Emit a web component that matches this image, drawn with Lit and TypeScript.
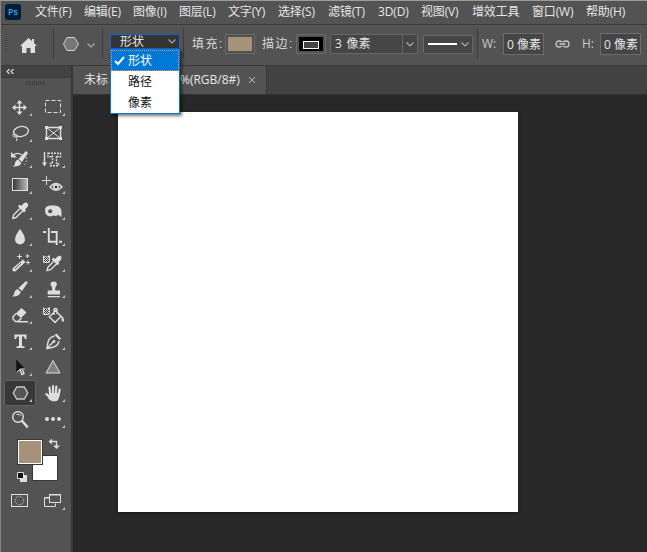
import { LitElement, html, css, svg } from "lit";
import { customElement, property } from "lit/decorators.js";

const menus: [string, number][] = [
  ["文件(F)", 49], ["编辑(E)", 49], ["图像(I)", 46], ["图层(L)", 49],
  ["文字(Y)", 50], ["选择(S)", 50], ["滤镜(T)", 50], ["3D(D)", 43],
  ["视图(V)", 51], ["增效工具", 60], ["窗口(W)", 54], ["帮助(H)", 50],
];

const checker = svg`<path class="fill" d="M6 5l1.500 1.500h3L12 5l1 1v5.500L11.500 13H7l-1-1z"/>
  <path class="dark" d="M8 7h1v1H8zM10 7h1v1h-1zM7 8h1v1H7zM9 8h1v1H9zM11 8h1v1h-1zM8 9h1v1H8zM10 9h1v1h-1zM7 10h1v1H7zM9 10h1v1H9zM11 10h1v1h-1zM8 11h1v1H8zM10 11h1v1h-1z"/>`;

const icons: Record<string, unknown> = {
  move: svg`<path class="line2" d="M15.500 8v11M10 13.500h11"/><path class="fill" d="M15.500 6l3 3.500h-6zM15.500 21l3-3.500h-6zM8 13.500l3.500-3v6zM23 13.500l-3.500-3v6z"/>`,
  marquee: svg`<rect class="line" x="8.500" y="6.500" width="15" height="12" stroke-dasharray="4 2"/>`,
  lasso: svg`<ellipse class="line2" cx="17" cy="11.500" rx="7.500" ry="5" transform="rotate(-10 17 11.500)"/><path class="line" d="M10.500 14c-2.500 0-2 3 .500 3s3-3-.500-3M12 17q1.500 1 .500 4"/>`,
  frame: svg`<path class="line2" d="M9.500 7.500h14v11h-14z"/><path class="line" d="M9.500 7.500l14 11M23.500 7.500l-14 11"/><path class="fill" d="M8 6h3v3H8zM22 6h3v3h-3zM8 17h3v3H8zM22 17h3v3h-3z"/>`,
  history: svg`<path class="line2" d="M9 9.500q4-4 9-.500"/><path class="fill" d="M7 6v5.500h6zM22 5l2 2-6 9-3.500-3zM14 13.500l3.500 3.500q-2 4-9 3.500 3-1.500 2.500-4 1-2.500 3-3z"/><path class="line" stroke-dasharray="1.500 2" d="M22.500 11q1 6-4 9"/>`,
  vtype: svg`<path class="line2" d="M7.500 6v12"/><path class="fill" d="M5 16.500h5l-2.500 4z"/><path class="line2" stroke-dasharray="2 1" d="M11 7.200h12.500v3.500h-3V10h-1v7.500h2v2.300h-8v-2.300h2V10h-1v.700H11z"/>`,
  gradient: svg`<defs><linearGradient id="ramp"><stop stop-color="#333"/><stop offset="1" stop-color="#bbb"/></linearGradient></defs><rect class="line" x="8.500" y="6.500" width="15" height="12" style="fill:url(#ramp)"/>`,
  redeye: svg`<path class="line" d="M5 8.500h9M9.500 4v9"/><path class="line2" d="M13 15q6-7 12 0-6 6.500-12 0z"/><circle class="fill" cx="19" cy="15" r="3"/><circle class="dark" cx="19" cy="15" r="1.300"/>`,
  eyedropper: svg`<path class="fill" d="M17 8l2-2q3-2.500 4.500-.800t-.500 4.300l-2 2 1 1-2 2-6-6 1.500-2z"/><path class="line2" d="M16 10.500L9.500 17l-.700 3.300L12 19.500l6.500-6.500"/>`,
  sponge: svg`<path class="fill" fill-rule="evenodd" d="M8 12q0-4 5-4.500h4.500q6.500.500 7 6V19l-2-1.500-1.500-.500-2 1-3-.500-2 1q-6 0-6-6.500zm3 1.200a2.200 2 0 1 0 4.400 0 2.200 2 0 1 0-4.400 0z"/>`,
  drop: svg`<path class="fill" d="M16 5q5 6.500 5 10.500a5 5 0 0 1-10 0Q11 11.500 16 5z"/>`,
  crop: svg`<path class="line3" d="M6 8h3M11.800 4v13.700H20M14 8h5.700v13M22 17.700h3"/>`,
  wand: svg`<path class="fill" d="M19 9.500l2.500 2.500-10 9.300q-2 .500-2.800-.500t.300-2.800z"/><path class="line" d="M15.500 4v5M13 6.500h5M23.500 4v4M21.500 6h4M24 10.500v4M22 12.500h4"/><path class="darkline" d="M11 19l6-6"/>`,
  sampler: svg`${checker}<path class="fill" d="M18 9l2.500-2.500Q23 5 24.200 6.500t-.700 3.800l-2 2 1 1-2 2-6-6 2-1.500z"/><path class="line2" d="M17 11l-6 6-1 3.500 3.500-.800L19.500 14"/>`,
  brush: svg`<path class="fill" d="M21.500 5.500q2.500-1 2 1.500l-5.500 8-3.500-3zM13.500 13l3.500 3q-2 5-9 4.500 2.500-1.500 2.300-4 1-3 3.200-3.500z"/>`,
  stamp: svg`<path class="fill" d="M13.500 8.500a3.200 3 0 1 1 6.400 0L18.200 12v2.500H23v4H10.700v-4h4.500V12zM10.700 20H23v1.300H10.700z"/>`,
  eraser: svg`<path class="fill" d="M17.500 6l5 4.500-5.500 5.500-5.200-4.500z"/><path class="line2" d="M12 11.500l-3 3.200v2.300l2.500 2.500h2.700l3.300-3.500M13 19.800h11"/>`,
  bucket: svg`${checker}<path class="line2" d="M18.500 8.700l5.500 5.500-6 6.300-5.700-5.800zM17 13V7.500q1.500-2 3 0V12"/><path class="fill" d="M22.500 12.500q5 2 4.500 7h-2.200l-.300-4z"/>`,
  type: svg`<path class="fill" d="M10.500 6.500h12v4.500h-1.500l-1-2.500H18v9.500l2.500.500V20h-8v-1.500L15 18V8.500h-2L12 11h-1.500z"/>`,
  pen: svg`<path class="fill" d="M19.500 5.500l4.500 5-1.500 1.500-5-5z"/><path class="line2" d="M17.500 8q-5.500 1.500-6.500 6l-1.200 6.500L16 19.200q5-1.200 6-6.200M10 20.300l6.500-6.500"/><circle class="fill" cx="17" cy="13.500" r="1.400"/>`,
  arrow: svg`<path class="line2" d="M15.500 15l2.500 5.500 2-.800-2-5"/><path class="black" d="M12.500 6v12.500l3.500-3.500h5z"/><path class="line" d="M12.500 18.500L16 15h5"/>`,
  triangle: svg`<path class="line shape" d="M16 6.500l7 12.500H9z"/>`,
  hexagon: svg`<path class="line2 dim" d="M12.800 7h7.400l3.500 6-3.500 6h-7.400l-3.500-6z"/>`,
  hand: svg`<path class="finger" d="M13.300 15l-.800-7.500M16 14V6M18.800 14l.500-7.300M21.500 15.500L22.700 9.500M9.300 14l4 4"/><path class="fill" d="M12.200 13h10.500l-.800 5q-1 3.300-3.500 3.300h-3Q13 21 11 18z"/>`,
  zoom: svg`<circle class="line2" cx="14" cy="11" r="5.300"/><path class="line" d="M12.500 8.500q3-1 4.500 1.500"/><path class="handle" d="M18.500 15.500l4.500 5"/>`,
  more: svg`<circle class="fill" cx="10" cy="13" r="2"/><circle class="fill" cx="16" cy="13" r="2"/><circle class="fill" cx="22" cy="13" r="2"/>`,
  mask: svg`<rect class="line" x="7.500" y="6.500" width="16" height="12"/><circle class="line" cx="15.500" cy="12.500" r="4.300" stroke-dasharray="1 1.250"/>`,
  screen: svg`<path class="line" d="M12 9.500H7.500v9h11v-3"/><rect class="line" x="12.500" y="6.500" width="11" height="8"/><path class="line" d="M12 7h12M7.500 10h4.500"/>`,
};

const tools = [
  "move", "marquee", "lasso", "frame", "history", "vtype", "gradient", "redeye",
  "eyedropper", "sponge", "drop", "crop", "wand", "sampler", "brush", "stamp",
  "eraser", "bucket", "type", "pen", "arrow", "triangle", "hexagon", "hand", "zoom", "more",
];
const plainTools = new Set(["frame", "triangle", "bucket", "zoom", "mask"]);

@customElement("tool-icon")
class ToolIcon extends LitElement {
  @property() name = "";
  static styles = css`
    :host { display: block; width: 33px; height: 26px; }
    :host([selected]) { width: 32px; box-sizing: border-box; background: #383838; box-shadow: inset 0 0 0 1px #646464; border-radius: 2px; }
    svg { display: block; }
    .fill { fill: #dedede; }
    .line, .line2, .line3, .handle, .finger { fill: none; stroke: #dedede; stroke-width: 1; }
    .line2 { stroke-width: 1.4; }
    .line3 { stroke-width: 1.9; }
    .handle { stroke-width: 2.6; stroke-linecap: round; }
    .finger { stroke-width: 2.2; stroke-linecap: round; }
    .dark { fill: #303030; }
    .darkline { stroke: #535353; stroke-width: 1; }
    .shape { fill: #808080; }
    .dim { fill: #535353; stroke: #c8c8c8; }
    .black { fill: #111; stroke: #222; stroke-width: 1; }
  `;
  render() {
    return html`<svg width="33" height="26" viewBox="0 0 33 26">${icons[this.name]}
      ${plainTools.has(this.name) ? "" : svg`<path fill="#bdbdbd" d="M28 19v3h-3z"/>`}</svg>`;
  }
}

@customElement("app-root")
class AppRoot extends LitElement {
  static styles = css`
    :host { display: block; box-sizing: border-box; width: 647px; height: 552px; overflow: hidden; position: relative;
      border-top: 1px solid #9b9b9b; border-left: 1px solid #858585; background: #535353; color: #e6e6e6;
      font: 12px/16px "Open Sans", "Noto Sans CJK SC", sans-serif; white-space: nowrap; }
    * { box-sizing: border-box; }
    svg { display: block; flex: none; }
    .menubar { display: flex; height: 24px; border-bottom: 1px solid #393939; padding-left: 4px; }
    .logo { width: 16px; height: 16px; margin: 3px 14px 0 0; border-radius: 3px; background: #001e36; color: #31a8ff; font-weight: 600; font-size: 9px; line-height: 15px; text-align: center; }
    .menu { flex: none; line-height: 21px; letter-spacing: -.15px; }
    .options { display: flex; align-items: center; height: 41px; border-bottom: 1px solid #393939; padding: 0 0 2px 4px; }
    .options > * { flex: none; }
    .grip { width: 2px; height: 20px; background: repeating-linear-gradient(#3c3c3c 0 1px, #595959 1px 2px); }
    .sep { width: 1px; height: 30px; background: #3b3b3b; }
    .home { margin: 2px 16px 0 13px; }
    .poly { margin: 0 8px 0 9px; }
    .chev { margin-right: 7px; padding-top: 2px; }
    .select { width: 70px; height: 15px; margin: -5px 3px 0 7px; border: 1px solid #1264cf; border-radius: 2px 2px 0 0; background: #343434; display: flex; align-items: center; justify-content: space-between; padding: 0 3px 0 9px; font-size: 12px; line-height: 12px; }
    .label { font-family: "Liberation Sans", "Noto Sans CJK SC", sans-serif; letter-spacing: 1.5px; color: #d8d8d8; }
    .fill-label { margin-left: 8px; width: 33px; }
    .stroke-label { margin-left: 7px; width: 34px; }
    .swatch { width: 30px; height: 20px; border: 1px solid #696969; padding: 2px; }
    .chip { display: block; height: 14px; background: #a69279; }
    .chip.stroke { background: #000; padding: 4px; }
    .chip.stroke::before { content: ""; display: block; height: 6px; border: 1px solid #fff; background: #444; }
    .combo { display: flex; align-items: center; height: 20px; border: 1px solid #686868; border-radius: 2px; background: #454545; }
    .width { width: 88px; margin-left: 4px; padding-left: 4px; word-spacing: 1.5px; }
    .arrow { margin-left: auto; width: 15px; height: 18px; border-left: 1px solid #686868; display: grid; place-items: center; }
    .style { width: 50px; height: 19px; margin: 0 4px 0 5px; padding: 0 3px 0 4px; justify-content: space-between; }
    .rule { width: 29px; height: 2px; background: #fff; }
    .axis { margin-left: 4px; width: 21px; color: #cacaca; }
    .num { width: 41px; height: 22px; border: 1px solid #6c6c6c; background: #454545; line-height: 21px; padding-left: 3px; overflow: hidden; }
    .link { margin: 0 12px 0 11px; }
    .axis.h { margin-left: 0; width: 18px; }
    .body { display: flex; height: 486px; }
    .toolbox { width: 70px; flex: none; }
    .collapse { height: 12px; background: #424242; border-bottom: 1px solid #393939; padding: 3px 0 0 5px; }
    .hgrip { width: 20px; height: 4px; margin: 3px 0 9px 25px; background: repeating-linear-gradient(90deg, #3d3d3d 0 1px, #565656 1px 2px); }
    .tools { display: grid; grid-template-columns: 33px 33px; grid-auto-rows: 26px; padding-left: 3px; }
    .colors { margin: 7px 0 0 15px; display: block; }
    .modes { display: flex; padding-left: 3px; margin-top: 1px; }
    .workspace { flex: 1; min-width: 0; border-left: 2px solid #363636; background: #282828; }
    .tabs { height: 29px; background: #424242; border-bottom: 1px solid #343434; display: flex; }
    .tab { width: 194px; height: 28px; background: #535353; border-right: 1px solid #373737; padding: 0 0 0 11px; display: flex; align-items: center; }
    .doc { width: 96px; }
    .mode { width: 68px; }
    .canvas { width: 400px; height: 400px; background: #fff; margin: 17px 0 0 45px; box-shadow: 0 1px 3px #1b1b1b; }
    .popup { position: absolute; left: 109px; top: 48px; width: 70px; height: 65px; border: 1px solid #0078d7; background: #fff; color: #111; box-shadow: 2px 2px 3px #0008; }
    .option { height: 21px; line-height: 21px; padding-left: 17px; position: relative; }
    .option.on { background: #0078d7; color: #fff; border: 1px dotted #ef9245; padding-left: 16px; line-height: 19px; }
    .check { position: absolute; left: 2px; top: 5px; }
  `;
  chevron() {
    return html`<svg width="8" height="5" viewBox="0 0 8 5"><path d="M.500.500L4 4 7.500.500" fill="none" stroke="#a8a8a8" stroke-width="1.200"/></svg>`;
  }
  render() {
    return html`
      <div class="menubar"><span class="logo">Ps</span>${menus.map(([t, w]) => html`<span class="menu" style="width:${w}px">${t}</span>`)}</div>
      <div class="options">
        <span class="grip"></span>
        <svg class="home" width="17" height="15" viewBox="0 0 17 15"><path fill="#dfdfdf" d="M8.500 0l3.500 3V1h2v4l3 3h-2v7h-4.500v-5h-4v5H2V8H0z"/></svg>
        <span class="sep"></span>
        <svg class="poly" width="16" height="14" viewBox="0 0 16 14"><path fill="#777" stroke="#d0d0d0" d="M4 .500h7.500l4 6.500-4 6.500H4L.500 7z"/></svg>
        <span class="chev">${this.chevron()}</span><span class="sep"></span>
        <span class="select">形状 ${this.chevron()}</span><span class="sep"></span>
        <span class="label fill-label">填充:</span><span class="swatch"><span class="chip"></span></span>
        <span class="label stroke-label">描边:</span><span class="swatch"><span class="chip stroke"></span></span>
        <span class="combo width">3 像素<span class="arrow">${this.chevron()}</span></span>
        <span class="combo style"><span class="rule"></span>${this.chevron()}</span><span class="sep"></span>
        <span class="axis">W:</span><span class="num">0 像素</span>
        <svg class="link" width="15" height="8" viewBox="0 0 15 8"><path fill="none" stroke="#c8c8c8" stroke-width="1.300" d="M7 2.200Q6 1 4 1a3 3 0 0 0 0 6q2 0 3-1.200M8 2.200Q9 1 11 1a3 3 0 0 1 0 6Q9 7 8 5.800M4.500 4h6"/></svg>
        <span class="axis h">H:</span><span class="num">0 像素</span>
      </div>
      <div class="body">
        <div class="toolbox">
          <div class="collapse"><svg width="8" height="5" viewBox="0 0 8 5"><path fill="none" stroke="#ddd" stroke-width="1.200" d="M3.500 0L1 2.500 3.500 5M7.500 0L5 2.500 7.500 5"/></svg></div>
          <div class="hgrip"></div>
          <div class="tools">${tools.map((t) => html`<tool-icon name=${t} ?selected=${t === "hexagon"}></tool-icon>`)}</div>
          <svg class="colors" width="46" height="48" viewBox="0 0 46 48">
            <path fill="#fff" stroke="#383838" d="M16.500 16.500h25v25h-25z"/>
            <path fill="#383838" d="M1 0h26v26H1z"/><path fill="#fff" d="M2 1h24v24H2z"/><path fill="#a69279" d="M3 2h22v22H3z"/>
            <path fill="none" stroke="#dadada" stroke-width="1.400" d="M35 2.500h5.500v5"/><path fill="#dadada" d="M32.500 2.500l3.500-3v6zM37 6.500h7l-3.500 3.500z"/>
            <path fill="#dedede" d="M4 36h7v7H4z"/><path fill="#111" stroke="#dedede" d="M1.500 33.500h6v6h-6z"/>
          </svg>
          <div class="modes"><tool-icon name="mask"></tool-icon><tool-icon name="screen"></tool-icon></div>
        </div>
        <div class="workspace">
          <div class="tabs"><div class="tab"><span class="doc">未标</span><span class="mode">%(RGB/8#)</span>
            <svg width="8" height="8" viewBox="0 0 8 8"><path stroke="#b5b5b5" d="M1 1l6 6M7 1L1 7"/></svg></div></div>
          <div class="canvas"></div>
        </div>
      </div>
      <div class="popup">
        <div class="option on"><svg class="check" width="11" height="10" viewBox="0 0 11 10"><path fill="none" stroke="#fff" stroke-width="2" d="M1 5l3 3 6-7"/></svg>形状</div>
        <div class="option">路径</div><div class="option">像素</div>
      </div>`;
  }
}
